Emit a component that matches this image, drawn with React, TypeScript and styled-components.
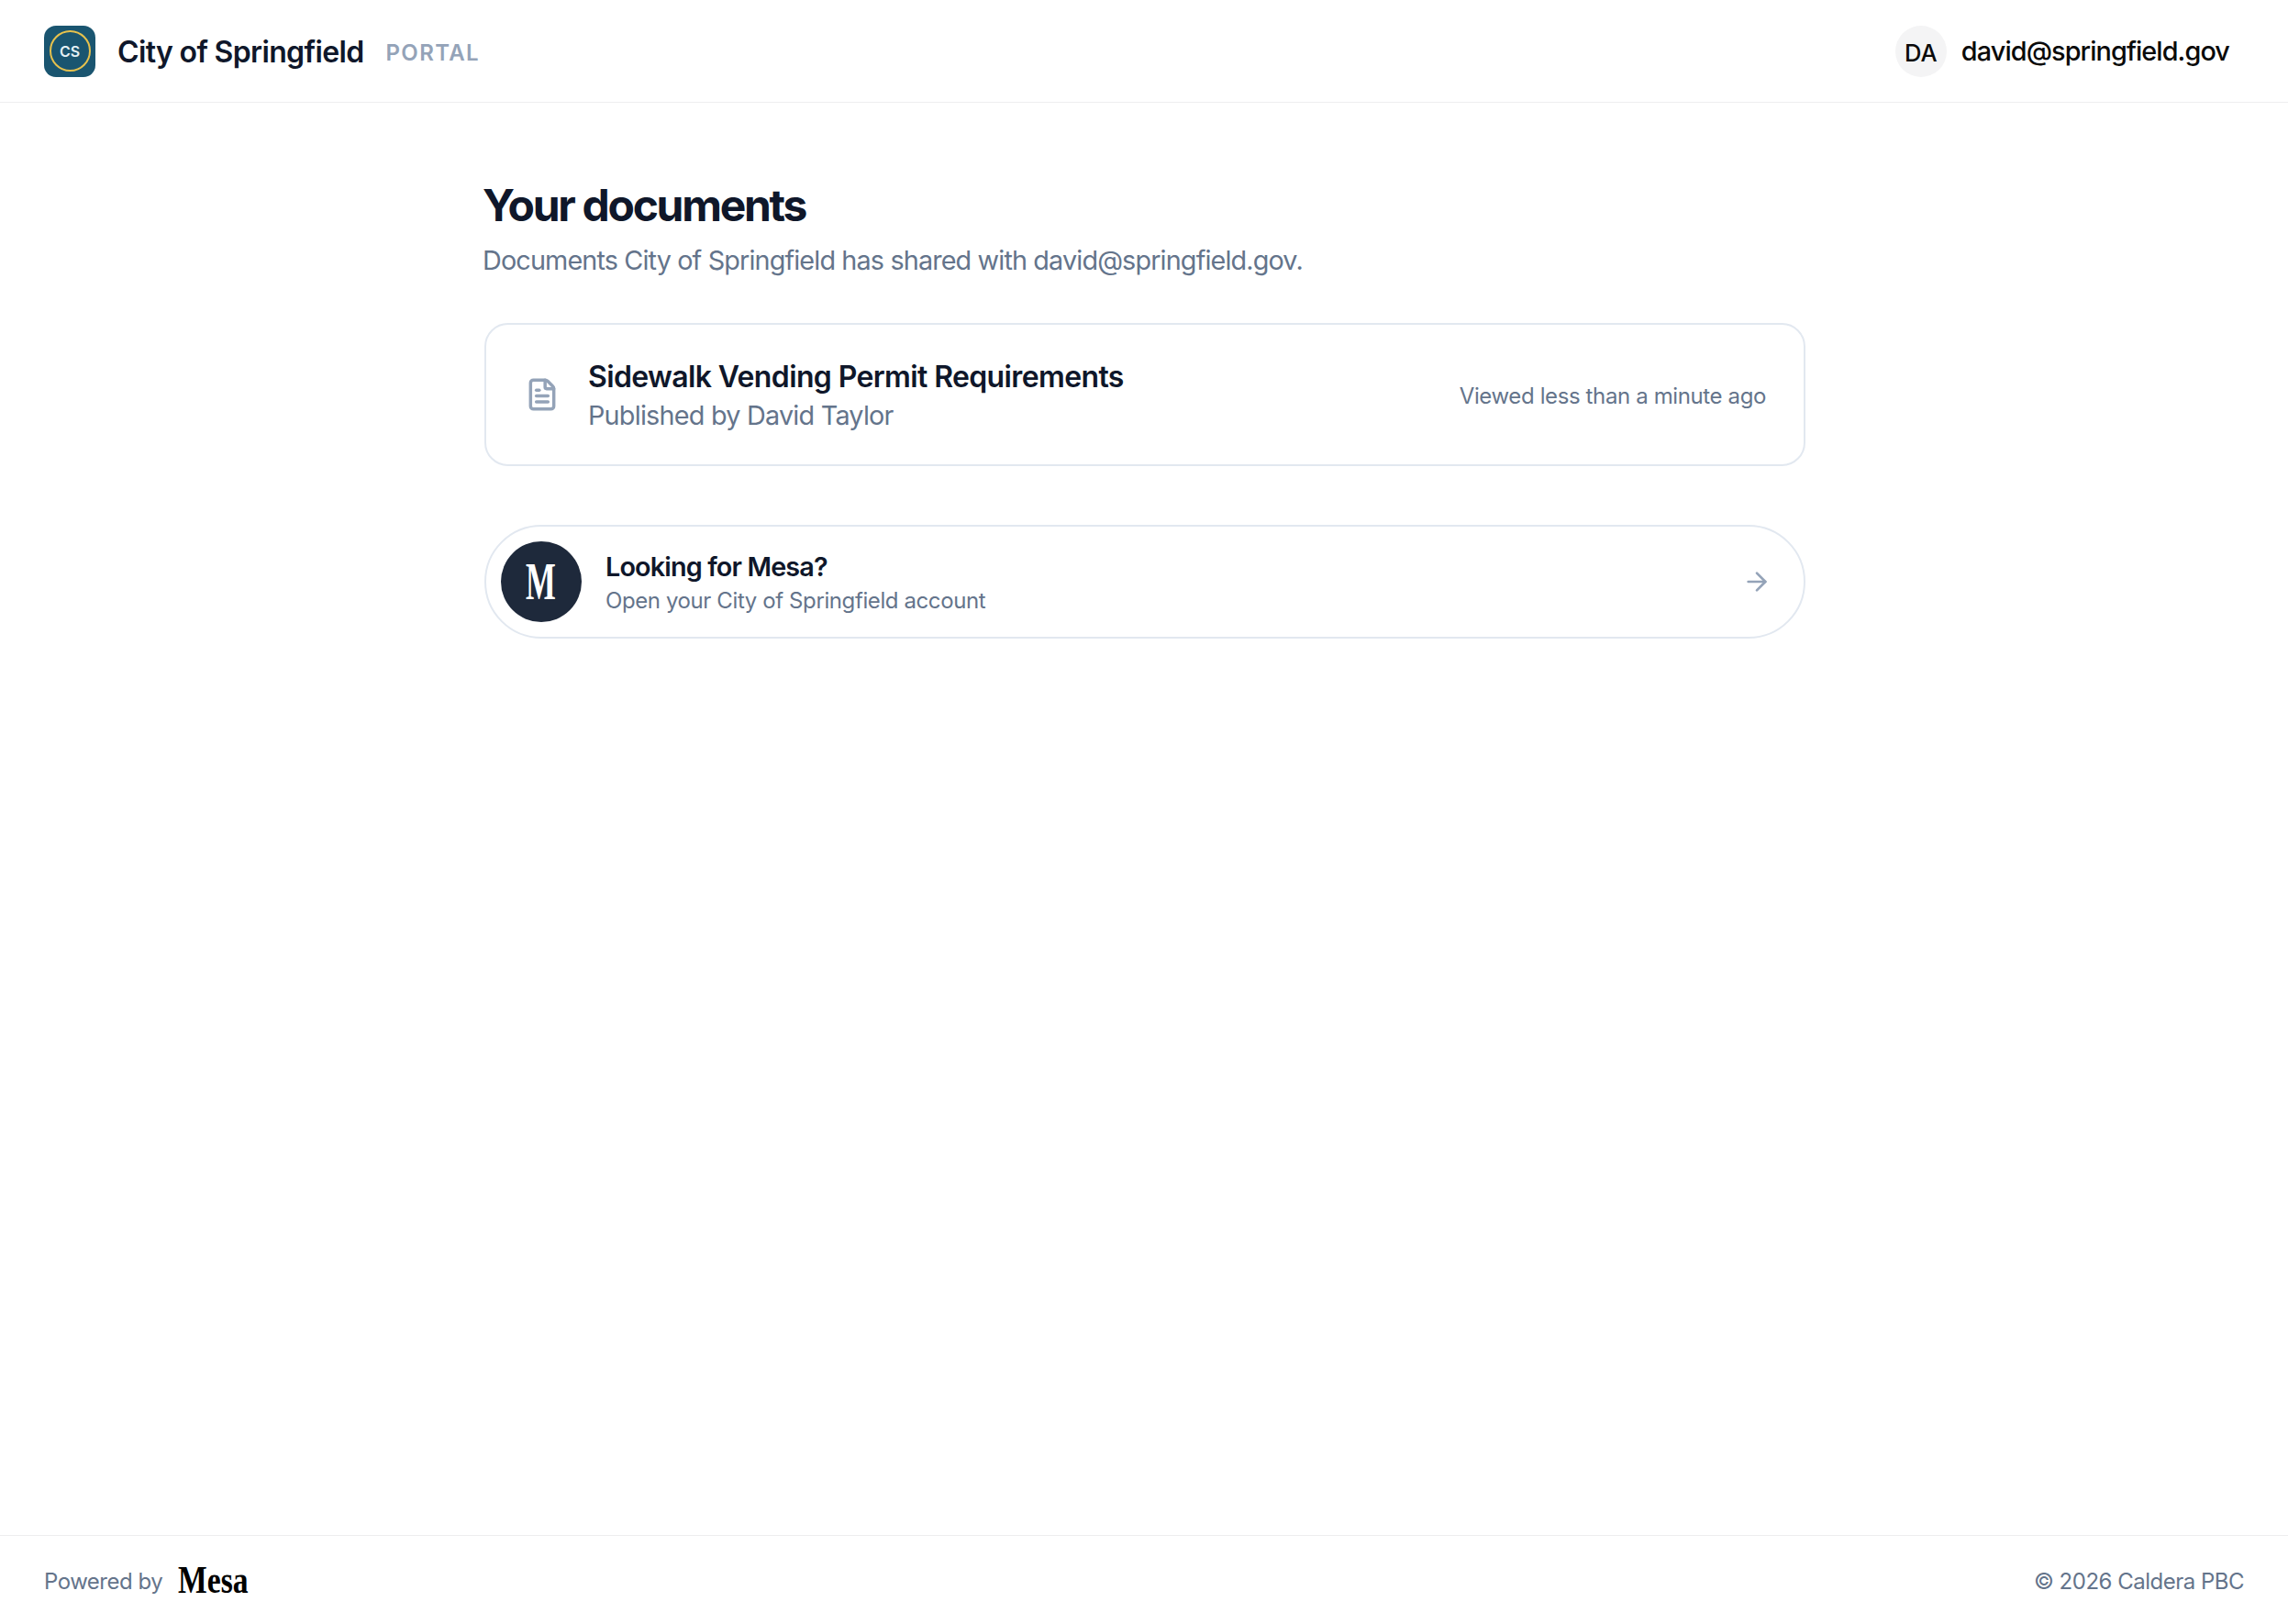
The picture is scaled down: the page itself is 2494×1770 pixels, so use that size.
import styled, { createGlobalStyle } from 'styled-components'
import { ArrowRight, FileText } from 'lucide-react'

const GlobalStyle = createGlobalStyle`
    html, body, #root {
        height: 100%;
        margin: 0;
    }
    body {
        background: #fff;
        font-family: Inter, "Liberation Sans", sans-serif;
        color: #0f172a;
    }
    * {
        box-sizing: border-box;
    }
`;

const Page = styled.div`
    display: flex;
    flex-direction: column;
    height: 100%;
`;

const Header = styled.header`
    display: flex;
    align-items: center;
    justify-content: space-between;
    height: 112px;
    padding: 0 48px;
    border-bottom: 1.6px solid #eeeeef;
`;

const Brand = styled.div`
    display: flex;
    align-items: center;
`;

const Logo = styled.div`
    width: 56px;
    height: 56px;
    border-radius: 13px;
    background: #1a5570;
    display: flex;
    align-items: center;
    justify-content: center;
`;

const LogoRing = styled.div`
    width: 45px;
    height: 45px;
    border-radius: 50%;
    border: 2.5px solid #e6c14d;
    color: #e4f0f5;
    font-size: 16px;
    font-weight: 600;
    display: flex;
    align-items: center;
    justify-content: center;
`;

const OrgName = styled.span`
    margin-left: 24px;
    padding-top: 2px;
    font-size: 32px;
    font-weight: 600;
    letter-spacing: -0.65px;
    color: #0f172a;
`;

const PortalTag = styled.span`
    margin-left: 24px;
    padding-top: 3px;
    font-size: 24px;
    font-weight: 600;
    letter-spacing: 1.35px;
    color: #94a3b8;
`;

const UserBox = styled.div`
    display: flex;
    align-items: center;
    gap: 16px;
    padding-right: 16px;
`;

const Avatar = styled.div`
    width: 56px;
    height: 56px;
    border-radius: 50%;
    background: #f4f4f5;
    color: #0a0a0a;
    font-size: 25.6px;
    font-weight: 500;
    padding-top: 3px;
    display: flex;
    align-items: center;
    justify-content: center;
`;

const UserEmail = styled.span`
    font-size: 28.8px;
    font-weight: 500;
    letter-spacing: -0.9px;
    color: #0a0a0a;
`;

const Main = styled.main`
    flex: 1;
    width: 1440px;
    margin: 0 auto;
    padding-top: 80px;
`;

const Title = styled.h1`
    margin: 0 0 0 -1px;
    font-size: 48px;
    line-height: 64px;
    font-weight: 700;
    letter-spacing: -2.3px;
    color: #0f172a;
`;

const Subtitle = styled.p`
    margin: 8px 0 0 -1px;
    font-size: 28.8px;
    line-height: 40px;
    letter-spacing: -0.87px;
    color: #64748b;
`;

const DocCard = styled.a`
    display: flex;
    align-items: center;
    height: 156px;
    margin: 48px -1px 0 1px;
    padding: 0 41px 0 42px;
    border: 2px solid #e2e8f0;
    border-radius: 25.6px;
`;

const DocInfo = styled.div`
    flex: 1;
    margin-left: 31px;
    padding-top: 2px;
`;

const DocTitle = styled.div`
    font-size: 32px;
    line-height: 44px;
    font-weight: 600;
    letter-spacing: -0.63px;
    color: #0f172a;
`;

const DocMeta = styled.div`
    font-size: 28.8px;
    line-height: 40px;
    letter-spacing: -0.78px;
    color: #64748b;
`;

const Viewed = styled.div`
    padding-top: 2px;
    font-size: 24px;
    letter-spacing: -0.38px;
    color: #64748b;
`;

const MesaCard = styled.a`
    display: flex;
    align-items: center;
    height: 124px;
    margin: 64px -1px 0 1px;
    padding: 0 35px 0 16px;
    border: 2px solid #e2e8f0;
    border-radius: 999px;
`;

const MesaBadge = styled.div`
    width: 88px;
    height: 88px;
    border-radius: 50%;
    background: #1e293b;
    color: #fff;
    display: flex;
    align-items: center;
    justify-content: center;
    font-family: "Liberation Serif", serif;
    font-weight: 700;
    font-size: 56px;
`;

const MesaLetter = styled.span`
    display: inline-block;
    margin-right: 2px;
    transform: scaleX(0.62);
`;

const MesaInfo = styled.div`
    flex: 1;
    margin-left: 26px;
    padding-top: 3px;
`;

const MesaTitle = styled.div`
    font-size: 28.8px;
    line-height: 38px;
    font-weight: 600;
    letter-spacing: -0.87px;
    color: #0f172a;
`;

const MesaMeta = styled.div`
    font-size: 24px;
    line-height: 36px;
    letter-spacing: -0.4px;
    color: #64748b;
`;

const Footer = styled.footer`
    display: flex;
    align-items: center;
    justify-content: space-between;
    height: 97px;
    padding: 2px 48px 0;
    border-top: 1.6px solid #eeeeef;
    font-size: 24px;
    letter-spacing: -0.5px;
    color: #64748b;
`;

const Powered = styled.div`
    display: flex;
    align-items: center;
    gap: 17px;
`;

const MesaWord = styled.span`
    display: inline-block;
    margin-top: -2px;
    transform: scaleX(0.8);
    transform-origin: left center;
    font-family: "Liberation Serif", serif;
    font-weight: 700;
    font-size: 42px;
    letter-spacing: 0;
    color: #000;
`;

export default function App() {
    return (
        <Page>
            <GlobalStyle />
            <Header>
                <Brand>
                    <Logo>
                        <LogoRing>CS</LogoRing>
                    </Logo>
                    <OrgName>City of Springfield</OrgName>
                    <PortalTag>PORTAL</PortalTag>
                </Brand>
                <UserBox>
                    <Avatar>DA</Avatar>
                    <UserEmail>david@springfield.gov</UserEmail>
                </UserBox>
            </Header>
            <Main>
                <Title>Your documents</Title>
                <Subtitle>Documents City of Springfield has shared with david@springfield.gov.</Subtitle>
                <DocCard>
                    <FileText size={38} color="#94a3b8" strokeWidth={2.2} />
                    <DocInfo>
                        <DocTitle>Sidewalk Vending Permit Requirements</DocTitle>
                        <DocMeta>Published by David Taylor</DocMeta>
                    </DocInfo>
                    <Viewed>Viewed less than a minute ago</Viewed>
                </DocCard>
                <MesaCard>
                    <MesaBadge>
                        <MesaLetter>M</MesaLetter>
                    </MesaBadge>
                    <MesaInfo>
                        <MesaTitle>Looking for Mesa?</MesaTitle>
                        <MesaMeta>Open your City of Springfield account</MesaMeta>
                    </MesaInfo>
                    <ArrowRight size={32} color="#94a3b8" strokeWidth={2} />
                </MesaCard>
            </Main>
            <Footer>
                <Powered>
                    Powered by
                    <MesaWord>Mesa</MesaWord>
                </Powered>
                <span>© 2026 Caldera PBC</span>
            </Footer>
        </Page>
    )
};
